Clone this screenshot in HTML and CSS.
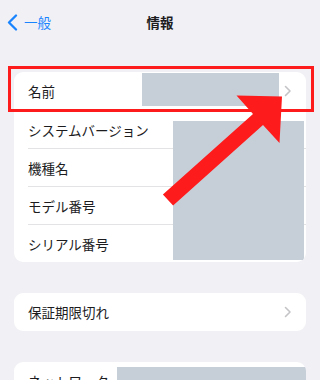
FILE: index.html
```html
<!DOCTYPE html>
<html lang="ja">
<head>
    <meta charset="UTF-8">
    <meta name="viewport" content="width=device-width, initial-scale=1">
    <title>情報</title>
    <link rel="stylesheet" href="styles.css">
</head>
<body>
<div class="nav">
    <div class="nav-back">
        <svg class="back-icon" width="11" height="17" viewBox="0 0 11 17">
            <path d="M9 1.5 L2 8.5 L9 15.5" fill="none" stroke="#1a84ff" stroke-width="2.3" stroke-linecap="round" stroke-linejoin="round"/>
        </svg>
        <span>一般</span>
    </div>
    <div class="nav-title">情報</div>
    <div></div>
</div>

<div class="main">
    <div class="card card-info">
        <div class="row">
            <span class="label">名前</span>
            <svg class="chevron" width="8" height="12" viewBox="0 0 8 12">
                <path d="M1.5 1.5 L6 6 L1.5 10.5" fill="none" stroke="#c4c4c7" stroke-width="1.6" stroke-linecap="round" stroke-linejoin="round"/>
            </svg>
        </div>
        <div class="row"><span class="label">システムバージョン</span></div>
        <div class="row"><span class="label">機種名</span></div>
        <div class="row"><span class="label">モデル番号</span></div>
        <div class="row"><span class="label">シリアル番号</span></div>

        <div class="mask mask-name"></div>
        <div class="mask mask-values"></div>
    </div>

    <div class="card">
        <div class="row">
            <span class="label">保証期限切れ</span>
            <svg class="chevron" width="8" height="12" viewBox="0 0 8 12">
                <path d="M1.5 1.5 L6 6 L1.5 10.5" fill="none" stroke="#c4c4c7" stroke-width="1.6" stroke-linecap="round" stroke-linejoin="round"/>
            </svg>
        </div>
    </div>

    <div class="card card-network">
        <div class="row"><span class="label">ネットワーク</span></div>
        <div class="mask mask-network"></div>
    </div>
</div>

<!-- annotation -->
<div class="highlight"></div>
<svg class="arrow" width="320" height="380" viewBox="0 0 320 380">
    <polygon points="162.9,194.5 253,114 236.5,95.5 282,96.5 279.5,143 263,125 173.1,205.5" fill="#fe1b1b"/>
</svg>
</body>
</html>
```

FILE: styles.css
```css
* {
    margin: 0;
    padding: 0;
    box-sizing: border-box;
}

html,
body {
    width: 100%;
    height: 100%;
}

body {
    position: relative;
    overflow: hidden;
    background: #f0f0f5;
    color: #1c1c1e;
    font-family: "Noto Sans CJK JP", "Noto Sans", sans-serif;
    font-size: 13.5px;
}

.nav {
    height: 44px;
    display: grid;
    grid-template-columns: 1fr auto 1fr;
    align-items: center;
}

.nav-back {
    display: flex;
    align-items: center;
    gap: 6px;
    padding-left: 7px;
    color: #1a84ff;
    font-size: 13.5px;
}

.back-icon {
    display: block;
}

.nav-title {
    font-size: 13.5px;
    font-weight: bold;
}

.main {
    padding: 28px 14px 0;
    display: flex;
    flex-direction: column;
    gap: 31px;
}

.card {
    position: relative;
    background: #ffffff;
    border-radius: 9px;
    overflow: hidden;
}

.row {
    height: 38px;
    margin-left: 14px;
    padding-right: 14px;
    display: flex;
    align-items: center;
    justify-content: space-between;
}

.row + .row {
    border-top: 1px solid #e3e3e6;
}

.chevron {
    display: block;
}

.mask {
    position: absolute;
    background: #c6ced8;
}

.mask-name {
    left: 128px;
    top: 1px;
    width: 137px;
    height: 33px;
}

.mask-values {
    left: 159px;
    top: 49px;
    width: 131px;
    bottom: 2px;
}

.mask-network {
    left: 103px;
    top: 5px;
    right: 0;
    bottom: 0;
}

.highlight {
    position: absolute;
    left: 8px;
    top: 66px;
    width: 306px;
    height: 46px;
    border: 3px solid #fe1b1b;
}

.arrow {
    position: absolute;
    left: 0;
    top: 0;
}
```
